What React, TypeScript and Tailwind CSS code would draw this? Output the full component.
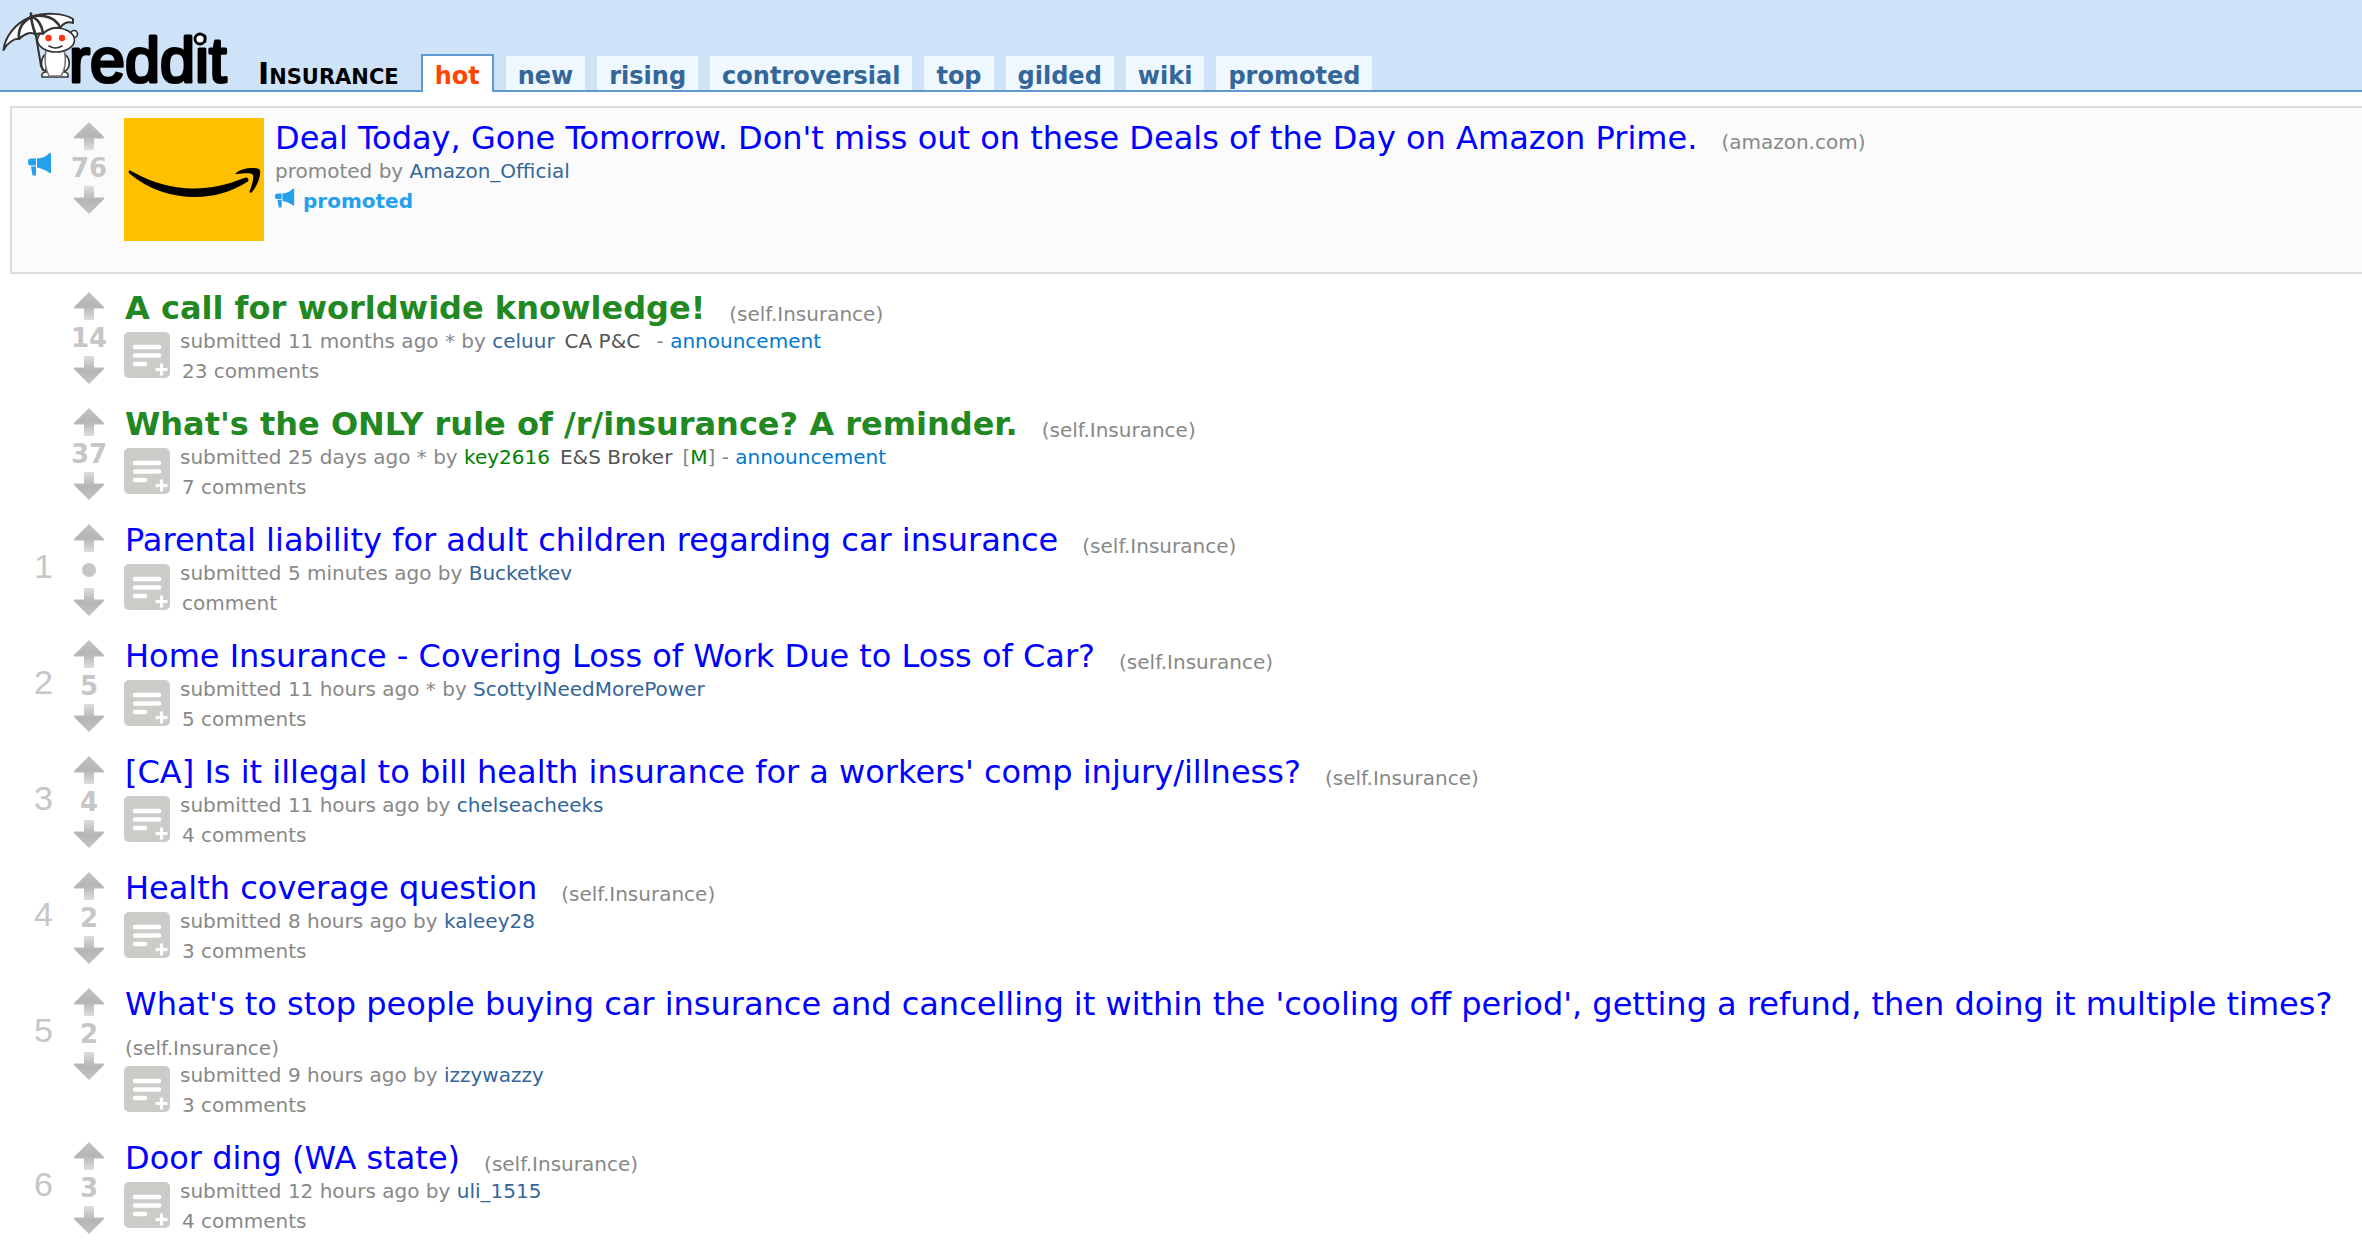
import React from 'react';

const Arrow = ({ down = false }: { down?: boolean }) => (
  <button type="button" aria-label={down ? 'downvote' : 'upvote'} className="block h-7 w-[30px]">
    <svg viewBox="0 0 30 28" className={down ? 'size-full rotate-180' : 'size-full'}>
      <defs>
        <linearGradient id={down ? 'fadeDown' : 'fadeUp'} x1="0" y1="0" x2="0" y2="1">
          <stop offset="0" stopColor="#c2c2c2" />
          <stop offset="0.5" stopColor="#b5b5b5" />
          <stop offset="1" stopColor="#dedede" />
        </linearGradient>
      </defs>
      <path d="M15 0 L30 15 V16.500 H20 V28 H10 V16.500 H0 V15 Z" fill={down ? 'url(#fadeDown)' : 'url(#fadeUp)'} />
    </svg>
  </button>
);

const Megaphone = ({ className }: { className: string }) => (
  <svg viewBox="0 0 24 24" className={className} fill="#24a0ed">
    <path d="M9 6.500 Q17 6 21.500 1 H23 V21 H21.500 Q17 17 9 15.500 Z M0 9 Q0 6.500 3 6.500 H8 V13.500 H3 Q0 13.500 0 11 Z M3 14.500 H8 V23.500 H4.500 Z" />
  </svg>
);

const RedditLogo = () => (
  <svg viewBox="0 0 236 90" className="h-[90px] w-[236px] overflow-visible" role="img" aria-label="reddit">
    <g stroke="#333" strokeWidth="1.6" strokeLinejoin="round" strokeLinecap="round" fill="#fff">
      <path d="M35 30 L41 66 L43 70" fill="none" strokeWidth="2" />
      <path d="M46 54 C40 58 40 68 46 72 Z M64 54 C71 58 71 68 64 72 Z" />
      <path d="M42 77 C41 72 46 71 50 73 H60 C64 71 69 72 68 77 Z" />
      <path d="M46 50 C44 60 46 70 49 76 H61 C65 70 67 60 64 50 Z" stroke="#777" />
      <circle cx="74" cy="34" r="3.500" />
      <ellipse cx="56" cy="40" rx="18.500" ry="12" />
      <path d="M49 46 Q55.500 50 62 46" fill="none" />
      <path d="M3.500 50 C5 37 15 23 31 17 C45 12 64 13 73 19 L73 23 C67 21 62 24 60 28 C54 27 47 29 43 34 C41 33 38 33 36 35 C33 31 25 33 19 39 C15 38 7 43 3.500 50 Z" strokeWidth="2" />
      <path d="M31 17 C22 22 18 30 19 39 M31 17 C32 23 33 29 36 35 M31 17 C38 18 42 26 43 33 M31 17 C45 13 56 19 60 27 M31 17 V13.500" fill="none" strokeWidth="2.600" />
    </g>
    <circle cx="48.500" cy="38" r="3.200" fill="#ff3311" />
    <circle cx="62" cy="38" r="3.200" fill="#ff3311" />
    <text x="69" y="82" fontFamily="Liberation Sans, sans-serif" fontSize="63" stroke="#000" strokeWidth="3.200" strokeLinejoin="round">reddit</text>
    <circle cx="200" cy="39" r="5" fill="#fff" stroke="#000" strokeWidth="2.800" />
  </svg>
);

const SelfIcon = () => (
  <button type="button" aria-label="expand text" className="mt-1.5 size-[46px] shrink-0">
    <svg viewBox="0 0 46 46" className="size-full">
      <rect width="46" height="46" rx="5" fill="#cbcbc8" />
      <path d="M11 15H35M11 23.500H35M11 32H21" stroke="#fff" strokeWidth="4.600" strokeLinecap="round" />
      <path d="M37.500 31.500V43.500M31.500 37.500H43.500" stroke="#fff" strokeWidth="3.200" />
    </svg>
  </button>
);

const Votes = ({ score }: { score: string }) => (
  <div className="flex w-[70px] shrink-0 flex-col items-center">
    <Arrow />
    <span className="flex h-9 items-center text-[26px] leading-9 font-bold text-[#c6c6c6]">
      {score === '•' ? <span className="size-3.5 rounded-full bg-[#c6c6c6]" aria-label="score hidden" /> : score}
    </span>
    <Arrow down />
  </div>
);

type Post = {
  rank?: string;
  score: string;
  title: string;
  sticky?: boolean;
  when: string;
  author: string;
  flair?: string;
  mod?: boolean;
  comments: string;
};

const tabs = ['new', 'rising', 'controversial', 'top', 'gilded', 'wiki', 'promoted'];

const posts: Post[] = [
  { score: '14', title: 'A call for worldwide knowledge!', sticky: true, when: '11 months ago *', author: 'celuur', flair: 'CA P&C', comments: '23 comments' },
  { score: '37', title: "What's the ONLY rule of /r/insurance? A reminder.", sticky: true, when: '25 days ago *', author: 'key2616', flair: 'E&S Broker', mod: true, comments: '7 comments' },
  { rank: '1', score: '•', title: 'Parental liability for adult children regarding car insurance', when: '5 minutes ago', author: 'Bucketkev', comments: 'comment' },
  { rank: '2', score: '5', title: 'Home Insurance - Covering Loss of Work Due to Loss of Car?', when: '11 hours ago *', author: 'ScottyINeedMorePower', comments: '5 comments' },
  { rank: '3', score: '4', title: "[CA] Is it illegal to bill health insurance for a workers' comp injury/illness?", when: '11 hours ago', author: 'chelseacheeks', comments: '4 comments' },
  { rank: '4', score: '2', title: 'Health coverage question', when: '8 hours ago', author: 'kaleey28', comments: '3 comments' },
  { rank: '5', score: '2', title: "What's to stop people buying car insurance and cancelling it within the 'cooling off period', getting a refund, then doing it multiple times?", when: '9 hours ago', author: 'izzywazzy', comments: '3 comments' },
  { rank: '6', score: '3', title: 'Door ding (WA state)', when: '12 hours ago', author: 'uli_1515', comments: '4 comments' },
];

const Row = ({ p }: { p: Post }) => (
  <article className="flex pb-[22px]">
    <span className="w-[54px] shrink-0 pt-6 pr-px text-right font-['Liberation_Sans',sans-serif] text-[34px] leading-9 text-[#c6c6c6]">{p.rank}</span>
    <Votes score={p.score} />
    <div className="min-w-0 flex-1">
      <h2 className="-mt-[3px] -mb-px pl-px text-[32px] leading-[38px]">
        <a href="#" className={p.sticky ? 'mr-6 font-bold text-[#228822]' : 'mr-6 text-[#0000ff]'}>{p.title}</a>
        <span className="inline-block align-[-2px] text-xl leading-6 text-[#888]">(<a href="#">self.Insurance</a>)</span>
      </h2>
      <div className="flex gap-2.5">
        <SelfIcon />
        <div className="text-xl text-[#888]">
          <p className="leading-[30px]">
            submitted {p.when} by{' '}
            <a href="#" className={p.mod ? 'text-[#008000]' : 'text-[#336699]'}>{p.author}</a>
            {p.flair && <span className="mx-2.5 text-[#545454]">{p.flair}</span>}
            {p.mod && <span>[<a href="#" className="text-[#008000]">M</a>]</span>}
            {p.sticky && <span> - <a href="#" className="text-[#0079d3]">announcement</a></span>}
          </p>
          <a href="#" className="ml-0.5 block leading-[30px]">{p.comments}</a>
        </div>
      </div>
    </div>
  </article>
);

export default function App() {
  return (
    <div className="min-h-screen bg-white font-['DejaVu_Sans',sans-serif]">
      <header className="flex h-[92px] items-end border-b-2 border-[#5f99cf] bg-[#cee3f8]">
        <a href="#" className="shrink-0"><RedditLogo /></a>
        <h1 className="ml-[22px] pb-0.5 text-[30px] leading-7 font-bold [font-variant:small-caps]">Insurance</h1>
        <nav className="ml-[22px] flex items-end gap-3 text-2xl leading-7 font-bold text-[#336699]">
          <a href="#" className="-mb-0.5 border-2 border-b-0 border-[#5f99cf] bg-white px-3 pt-1.5 pb-0.5 text-[#ff4500]">hot</a>
          {tabs.map((t) => <a key={t} href="#" className="bg-[#eff7ff] px-3 pt-1.5">{t}</a>)}
        </nav>
      </header>
      <main className="pt-3.5">
        <section className="mb-[18px] ml-2.5 flex h-[168px] border-2 border-r-0 border-[#ddd] bg-[#fbfbfb] pt-2.5">
          <div className="flex w-[42px] shrink-0 justify-end pt-[34px] pr-0.5">
            <Megaphone className="size-6" />
          </div>
          <div className="pt-1"><Votes score="76" /></div>
          <a href="#" aria-label="Amazon" className="block h-[123px] w-[140px] shrink-0">
            <svg viewBox="0 0 140 123" className="size-full">
              <rect width="140" height="123" fill="#ffc000" />
              <path d="M5 53 C6 52 7 53 9 54 C48 76 86 74 120 60 C124 58 126 62 123 64 C88 87 38 83 6 56 C5 55 4 54 5 53 Z" />
              <path d="M112 55 C118 50 128 49 135 51 C138 53 135 66 128 74 C126 76 125 74 126 72 C128 67 130 60 129 57 C126 54 119 56 113 56 C112 56 111 56 112 55 Z" />
            </svg>
          </a>
          <div className="min-w-0 pt-0.5 pl-[11px] text-xl leading-[30px] text-[#888]">
            <h2 className="text-[32px] leading-9">
              <a href="#" className="mr-6 text-[#0000ff]">Deal Today, Gone Tomorrow. Don't miss out on these Deals of the Day on Amazon Prime.</a>
              <span className="inline-block text-xl leading-6 text-[#888]">(<a href="#">amazon.com</a>)</span>
            </h2>
            <p>promoted by <a href="#" className="text-[#336699]">Amazon_Official</a></p>
            <p className="flex items-start gap-2 font-bold text-[#24a0ed]"><Megaphone className="mt-0.5 size-5" />promoted</p>
          </div>
        </section>
        {posts.map((p) => <Row key={p.title} p={p} />)}
      </main>
    </div>
  );
}
